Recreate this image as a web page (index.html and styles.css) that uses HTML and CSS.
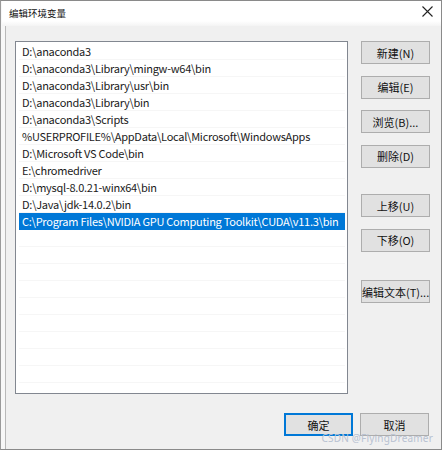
FILE: index.html
```html
<!DOCTYPE html>
<html lang="zh">
<head>
<meta charset="utf-8">
<title>编辑环境变量</title>
<link rel="stylesheet" href="styles.css">
</head>
<body>
<div class="window">
  <div class="titlebar">
    <span class="title">编辑环境变量</span>
    <span class="close"><svg width="11" height="11" viewBox="0 0 11 11"><path d="M0.5 0.5L10.5 10.5M10.5 0.5L0.5 10.5" stroke="#222" stroke-width="1.1" fill="none"/></svg></span>
  </div>
  <div class="content">
    <div class="list">
      <div class="row">D:\anaconda3</div>
      <div class="row">D:\anaconda3\Library\mingw-w64\bin</div>
      <div class="row">D:\anaconda3\Library\usr\bin</div>
      <div class="row">D:\anaconda3\Library\bin</div>
      <div class="row">D:\anaconda3\Scripts</div>
      <div class="row">%USERPROFILE%\AppData\Local\Microsoft\WindowsApps</div>
      <div class="row">D:\Microsoft VS Code\bin</div>
      <div class="row">E:\chromedriver</div>
      <div class="row">D:\mysql-8.0.21-winx64\bin</div>
      <div class="row">D:\Java\jdk-14.0.2\bin</div>
      <div class="row selected">C:\Program Files\NVIDIA GPU Computing Toolkit\CUDA\v11.3\bin</div>
      <div class="row"></div>
      <div class="row"></div>
      <div class="row"></div>
      <div class="row"></div>
      <div class="row"></div>
      <div class="row"></div>
      <div class="row"></div>
      <div class="row"></div>
      <div class="row"></div>
    </div>
    <div class="side">
      <button class="btn">新建(N)</button>
      <button class="btn">编辑(E)</button>
      <button class="btn">浏览(B)...</button>
      <button class="btn">删除(D)</button>
      <button class="btn gap-lg">上移(U)</button>
      <button class="btn">下移(O)</button>
      <button class="btn gap-xl">编辑文本(T)...</button>
    </div>
  </div>
  <div class="footer">
    <button class="btn primary">确定</button>
    <button class="btn">取消</button>
  </div>
  <div class="watermark">CSDN @FlyingDreamer</div>
</div>
</body>
</html>
```
FILE: styles.css
```css
html, body {
  margin: 0;
  padding: 0;
  background: #f0f0f0;
}
body {
  font-family: "Noto Sans CJK SC", "Noto Sans", sans-serif;
  font-size: 12px;
  color: #000;
}
.window {
  position: relative;
  width: 442px;
  height: 450px;
  box-sizing: border-box;
  border: 1px solid #8a8a8a;
  border-left: 1px solid #9a9a9a;
  background: #f0f0f0;
  box-shadow: inset 4px 0 0 #f7f7f7, inset 5px 0 0 #b8b8b8;
}
.titlebar {
  height: 25px;
  background: linear-gradient(#ffffff 0, #ffffff 20px, #f4f4f4 25px);
  display: flex;
  align-items: center;
  justify-content: space-between;
  padding: 0 4px 0 7px;
  margin-left: 1px;
}
.title {
  font-size: 9.5px;
  line-height: 12px;
  margin-top: -2px;
  color: #111;
}
.close {
  display: flex;
  width: 20px;
  height: 20px;
  align-items: center;
  justify-content: center;
  margin-top: -4px;
}
.content {
  display: flex;
  padding: 15px 0 0 14px;
}
.list {
  width: 333px;
  height: 353px;
  box-sizing: border-box;
  border: 1px solid #828790;
  background: #fff;
  padding: 1px 2px 0 3px;
  overflow: hidden;
}
.row {
  height: 17px;
  line-height: 16px;
  box-sizing: border-box;
  padding-left: 3px;
  white-space: nowrap;
  font-family: "Noto Sans CJK SC", "Noto Sans", sans-serif;
  font-size: 11px;
  letter-spacing: -0.25px;
  color: #1a1a1a;
  border-bottom: 1px solid #f6f6f6;
}
.row.selected {
  background: #0078d7;
  color: #fff;
  border-bottom-color: #0078d7;
}
.side {
  display: flex;
  flex-direction: column;
  margin-left: 13px;
  margin-top: 0;
}
.btn {
  width: 69px;
  height: 23px;
  box-sizing: border-box;
  border: 1px solid #adadad;
  background: #e1e1e1;
  font-family: "Noto Sans CJK SC", "Noto Sans", sans-serif;
  font-size: 11px;
  color: #111;
  padding: 0;
  margin: 0 0 11.5px 0;
  line-height: 20px;
  white-space: nowrap;
}
.side .btn.gap-lg {
  margin-top: 15px;
}
.side .btn.gap-xl {
  margin-top: 17px;
}
.footer {
  display: flex;
  justify-content: flex-end;
  gap: 7px;
  padding: 19px 12px 0 0;
}
.footer .btn {
  margin: 0;
}
.btn.primary {
  border: 2px solid #0078d7;
}
.watermark {
  position: absolute;
  right: 8px;
  bottom: 5px;
  font-family: "Noto Sans", sans-serif;
  font-size: 10px;
  line-height: 12px;
  color: #b8c2d2;
  letter-spacing: 0.2px;
}
```
